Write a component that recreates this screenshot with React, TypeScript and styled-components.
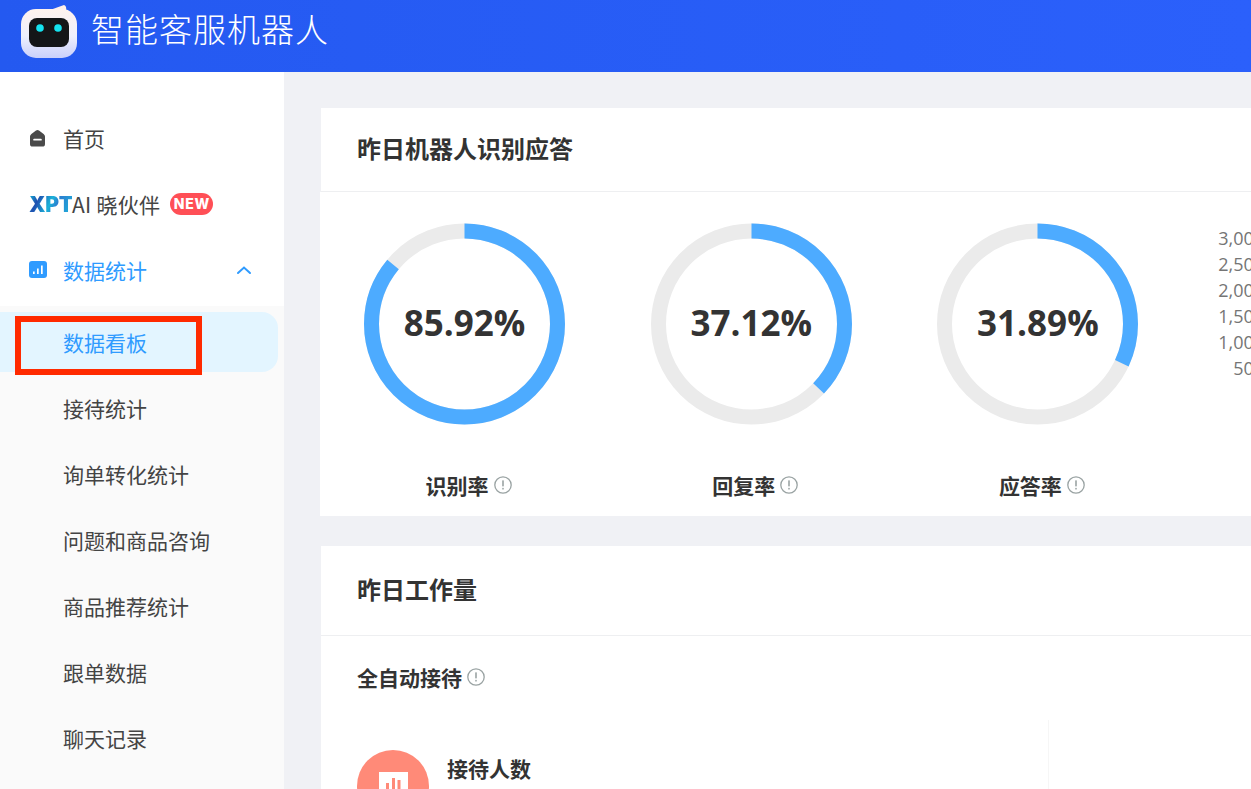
import styled, { createGlobalStyle } from 'styled-components'

const cjk = `'Noto Sans CJK SC', 'Noto Sans', sans-serif`

const GlobalStyle = createGlobalStyle`
  html, body {
    margin: 0;
    padding: 0;
    height: 100%;
    overflow: hidden;
    background: #f0f1f5;
    font-family: ${cjk};
  }
  * { box-sizing: border-box; }
`

const Page = styled.div`
  width: 1251px;
  height: 789px;
  overflow: hidden;
  position: relative;
  display: flex;
  flex-direction: column;
`

const Header = styled.header`
  height: 72px;
  flex: none;
  background: linear-gradient(90deg, #2459f0 0%, #2b60fb 100%);
  display: flex;
  align-items: flex-start;
  padding: 4px 0 0 20px;
  gap: 11px;
`

const BrandName = styled.div`
  color: #fff;
  font-size: 33px;
  font-weight: 300;
  line-height: 48px;
  letter-spacing: 1px;
  white-space: nowrap;
`

const Body = styled.div`
  flex: 1;
  display: flex;
  min-height: 0;
`

const Sidebar = styled.nav`
  width: 284px;
  flex: none;
  background: #fff;
  padding-top: 35px;
  display: flex;
  flex-direction: column;
`

const MenuRow = styled.div<{ $active?: boolean }>`
  height: 66px;
  flex: none;
  display: flex;
  align-items: center;
  padding: 0 0 4px 29px;
  color: ${p => (p.$active ? '#2f9bff' : '#444')};
  font-size: 21px;
  white-space: nowrap;
`

const MenuIcon = styled.svg`
  width: 18px;
  height: 18px;
  flex: none;
  margin-right: 16px;
`

const Chevron = styled.svg`
  width: 16px;
  height: 10px;
  margin-left: 89px;
`

const XptMark = styled.span`
  font-family: Inter, 'Liberation Sans', sans-serif;
  font-weight: 900;
  font-size: 21px;
  letter-spacing: -0.3px;
  width: 43px;
  background: linear-gradient(115deg, #12c0dc 0%, #1f4fb0 22%, #1bb3d9 48%, #2b7fd0 62%, #1cb8dc 100%);
  -webkit-background-clip: text;
  background-clip: text;
  color: transparent;
`

const XptLabel = styled.span`
  font-size: 21px;
  letter-spacing: 0.3px;
`

const NewBadge = styled.span`
  margin-left: 10px;
  width: 43px;
  height: 22px;
  border-radius: 11px;
  background: #ff4f56;
  color: #fff;
  font-family: Inter, 'Liberation Sans', sans-serif;
  font-weight: 800;
  font-size: 14px;
  letter-spacing: 0.7px;
  line-height: 22px;
  text-align: center;
`

const SubMenu = styled.div`
  flex: 1;
  background: #fafafa;
  padding-top: 6px;
  margin-top: 1px;
  display: flex;
  flex-direction: column;
`

const SubRow = styled.div<{ $active?: boolean }>`
  height: 60px;
  flex: none;
  margin: 0 6px 6px 0;
  padding-left: 63px;
  display: flex;
  align-items: center;
  color: ${p => (p.$active ? '#2f9bff' : '#444')};
  background: ${p => (p.$active ? '#e3f5ff' : 'transparent')};
  border-radius: 0 16px 16px 0;
  font-size: 21px;
  white-space: nowrap;
`

const Callout = styled.div`
  position: absolute;
  left: 15px;
  top: 316px;
  width: 187px;
  height: 59px;
  border: 6px solid #ff2a00;
  pointer-events: none;
`

const Main = styled.main`
  flex: 1;
  min-width: 0;
  padding: 36px 0 0 37px;
  display: flex;
  flex-direction: column;
  gap: 30px;
  overflow: hidden;
`

const Card = styled.section`
  background: #fff;
  flex: none;
  width: 1000px;
`

const CardHeader = styled.div<{ $height: number; $lineHeight: number }>`
  height: ${p => p.$height}px;
  padding-left: 36px;
  border-bottom: 1px solid #eeeff1;
  font-size: 24px;
  font-weight: 700;
  color: #333;
  line-height: ${p => p.$lineHeight}px;
`

const GaugeArea = styled.div`
  display: flex;
  height: 324px;
  margin-left: -1px;
  background: #fff;
  padding: 31px 0 0 44px;
`

const GaugeColumn = styled.div`
  width: 286.7px;
  flex: none;
  display: flex;
  flex-direction: column;
  align-items: flex-start;
`

const GaugeBox = styled.div`
  position: relative;
  width: 202px;
  height: 202px;
`

const GaugeValue = styled.div`
  position: absolute;
  inset: 0 1px 3px 0;
  display: flex;
  align-items: center;
  justify-content: center;
  font-family: 'Open Sans', sans-serif;
  font-size: 35px;
  font-weight: 700;
  color: #333;
`

const GaugeLabel = styled.div`
  width: 202px;
  margin-top: 40px;
  padding-left: 7px;
  display: flex;
  align-items: center;
  justify-content: center;
  gap: 5px;
  font-size: 21px;
  font-weight: 700;
  color: #333;
  line-height: 40px;
`

const Axis = styled.div`
  margin-left: -30px;
  margin-top: 2px;
  width: 70px;
  flex: none;
  display: flex;
  flex-direction: column;
  align-items: flex-end;
  font-family: 'Open Sans', sans-serif;
  font-size: 18px;
  color: #757575;
  line-height: 26px;
`

const WorkBody = styled.div`
  padding: 24px 0 0 36px;
`

const SectionTitle = styled.div`
  display: flex;
  align-items: center;
  gap: 5px;
  font-size: 21px;
  font-weight: 700;
  color: #333;
  line-height: 34px;
`

const StatRow = styled.div`
  display: flex;
  margin-top: 26px;
`

const StatCell = styled.div`
  width: 692px;
  height: 200px;
  flex: none;
  padding-top: 30px;
  display: flex;
  gap: 18px;
  border-right: 1px solid #f6f6f6;
`

const StatCircle = styled.div`
  width: 72px;
  height: 72px;
  flex: none;
  border-radius: 50%;
  background: #ff8a78;
  display: flex;
  align-items: center;
  justify-content: center;
`

const StatLabel = styled.div`
  font-size: 21px;
  font-weight: 700;
  color: #333;
  line-height: 36px;
`

const InfoSvg = styled.svg`
  width: 18px;
  height: 18px;
  flex: none;
`

const Info = () => (
  <InfoSvg viewBox="0 0 18 18" fill="none">
    <circle cx="9" cy="9" r="8.2" stroke="#9aa3a3" strokeWidth="1.3" />
    <rect x="8.2" y="4.2" width="1.6" height="6.2" rx="0.6" fill="#9aa3a3" />
    <rect x="8.2" y="11.8" width="1.6" height="1.8" rx="0.6" fill="#9aa3a3" />
  </InfoSvg>
)

const Gauge = ({ percent }: { percent: number }) => {
  const r = 93
  const len = 2 * Math.PI * r
  return (
    <svg width="202" height="202" viewBox="0 0 202 202">
      <circle cx="100.5" cy="101" r={r} fill="none" stroke="#ebebeb" strokeWidth="15" />
      <circle
        cx="100.5"
        cy="101"
        r={r}
        fill="none"
        stroke="#4dabff"
        strokeWidth="15"
        strokeDasharray={`${(len * percent) / 100} ${len}`}
        transform="rotate(-90 100.5 101)"
      />
    </svg>
  )
}

const RobotLogo = () => (
  <svg width="60" height="54" viewBox="0 0 60 54" style={{ flex: 'none' }}>
    <defs>
      <linearGradient id="robotFace" x1="0" y1="0" x2="0" y2="1">
        <stop offset="0" stopColor="#fff3ee" />
        <stop offset="0.55" stopColor="#eef0fd" />
        <stop offset="1" stopColor="#c9d0fb" />
      </linearGradient>
    </defs>
    <path d="M30 6 L 44 1 Q 47 2 46 7 Z" fill="#fff1ea" />
    <rect x="1" y="5" width="56" height="49" rx="15" fill="url(#robotFace)" />
    <rect x="9" y="14" width="40" height="29" rx="8" fill="#141618" />
    <circle cx="20" cy="24" r="3.8" fill="#15e3f0" />
    <circle cx="38" cy="24" r="3.8" fill="#15e3f0" />
  </svg>
)

const gauges = [
  { value: 85.92, label: '识别率' },
  { value: 37.12, label: '回复率' },
  { value: 31.89, label: '应答率' },
]

const subItems = ['接待统计', '询单转化统计', '问题和商品咨询', '商品推荐统计', '跟单数据', '聊天记录']

export default function App() {
  return (
    <Page>
      <GlobalStyle />
      <Header>
        <RobotLogo />
        <BrandName>智能客服机器人</BrandName>
      </Header>
      <Body>
        <Sidebar>
          <MenuRow>
            <MenuIcon viewBox="0 0 18 18">
              <path
                d="M8.5 1 Q9.2 1 10 1.6 L14.6 5 Q16 6 16 7.6 V15 Q16 17.6 13.4 17.6 H3.6 Q1 17.6 1 15 V7.6 Q1 6 2.4 5 L7 1.6 Q7.8 1 8.5 1 Z"
                fill="#4a4a4a"
              />
              <rect x="4.2" y="9.8" width="8.6" height="1.8" rx="0.9" fill="#fff" />
            </MenuIcon>
            首页
          </MenuRow>
          <MenuRow>
            <XptMark>XPT</XptMark>
            <XptLabel>AI 晓伙伴</XptLabel>
            <NewBadge>NEW</NewBadge>
          </MenuRow>
          <MenuRow $active>
            <MenuIcon viewBox="0 0 18 18">
              <rect x="0" y="0" width="18" height="17" rx="3" fill="#2f9bff" />
              <rect x="4" y="10.5" width="1.7" height="2.5" fill="#fff" />
              <rect x="8" y="7.5" width="1.7" height="5.5" fill="#fff" />
              <rect x="12" y="4.5" width="1.7" height="8.5" fill="#fff" />
            </MenuIcon>
            数据统计
            <Chevron viewBox="0 0 16 10" fill="none">
              <path d="M2 8 L8 2.5 L14 8" stroke="#2f9bff" strokeWidth="2" strokeLinecap="round" />
            </Chevron>
          </MenuRow>
          <SubMenu>
            <SubRow $active>数据看板</SubRow>
            {subItems.map(item => (
              <SubRow key={item}>{item}</SubRow>
            ))}
          </SubMenu>
        </Sidebar>
        <Main>
          <Card>
            <CardHeader $height={84} $lineHeight={79}>昨日机器人识别应答</CardHeader>
            <GaugeArea>
              {gauges.map(g => (
                <GaugeColumn key={g.label}>
                  <GaugeBox>
                    <Gauge percent={g.value} />
                    <GaugeValue>{g.value}%</GaugeValue>
                  </GaugeBox>
                  <GaugeLabel>
                    {g.label}
                    <Info />
                  </GaugeLabel>
                </GaugeColumn>
              ))}
              <Axis>
                <span>3,000</span>
                <span>2,500</span>
                <span>2,000</span>
                <span>1,500</span>
                <span>1,000</span>
                <span>500</span>
              </Axis>
            </GaugeArea>
          </Card>
          <Card>
            <CardHeader $height={90} $lineHeight={86}>昨日工作量</CardHeader>
            <WorkBody>
              <SectionTitle>
                全自动接待
                <Info />
              </SectionTitle>
              <StatRow>
                <StatCell>
                  <StatCircle>
                    <svg width="29" height="29" viewBox="0 0 29 29">
                      <rect width="29" height="29" fill="#fff" />
                      <rect x="7" y="11" width="3" height="11" fill="#ff8a78" />
                      <rect x="13" y="6" width="3" height="16" fill="#ff8a78" />
                      <rect x="18.5" y="8" width="3" height="14" fill="#ff8a78" />
                    </svg>
                  </StatCircle>
                  <StatLabel>接待人数</StatLabel>
                </StatCell>
              </StatRow>
            </WorkBody>
          </Card>
        </Main>
      </Body>
      <Callout />
    </Page>
  )
}
